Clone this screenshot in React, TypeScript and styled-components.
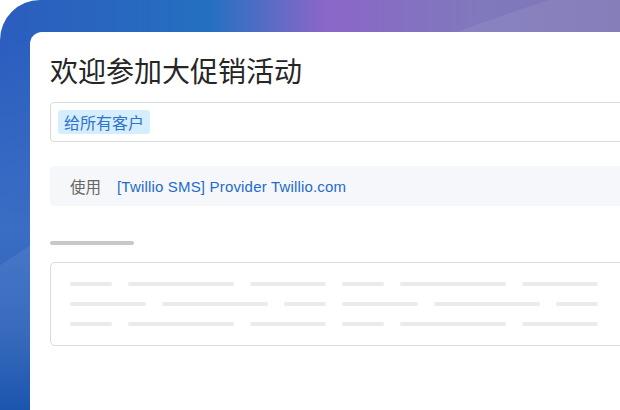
import styled, { createGlobalStyle } from 'styled-components'

const GlobalStyle = createGlobalStyle`
	html, body {
		margin: 0;
		padding: 0;
		background: #ffffff;
		overflow: hidden;
	}
	body {
		font-family: 'Liberation Sans', 'Noto Sans CJK SC', sans-serif;
	}
`

// skeleton widths for the placeholder table, px
const skeletonRows: number[][] = [
	[42, 106, 76, 42, 106, 76],
	[76, 106, 42, 76, 106, 42],
	[42, 106, 76, 42, 106, 76],
]

const App = () => {
	return (
		<>
			<GlobalStyle />
			<Backdrop>
				<Card>
					<Title>欢迎参加大促销活动</Title>
					<RecipientField>
						<Tag>给所有客户</Tag>
					</RecipientField>
					<ProviderRow>
						<ProviderLabel>使用</ProviderLabel>
						<ProviderLink href='#'>[Twillio SMS] Provider Twillio.com</ProviderLink>
					</ProviderRow>
					<SectionBar />
					<SkeletonBox>
						{skeletonRows.map((row, i) => (
							<SkeletonRow key={i}>
								{row.map((w, j) => (
									<SkeletonLine key={j} $width={w} />
								))}
							</SkeletonRow>
						))}
					</SkeletonBox>
				</Card>
			</Backdrop>
		</>
	)
}

export default App

const Backdrop = styled.div`
	width: 620px;
	height: 410px;
	overflow: hidden;
	box-sizing: border-box;
	padding: 32px 0 0 30px;
	border-top-left-radius: 40px;
	background:
		radial-gradient(
			circle 2262px at 1250px 2150px,
			rgba(255, 255, 255, 0.07) 2261px,
			rgba(255, 255, 255, 0) 2262px
		),
		linear-gradient(
			180deg,
			rgba(52, 104, 194, 0) 40px,
			#3a6ec4 230px,
			#2a60b8 330px,
			#0b48a8 410px
		),
		linear-gradient(
			90deg,
			#2c5dbf 0px,
			#2470c0 210px,
			#5a6cc6 270px,
			#8a66c8 325px,
			#8079bc 480px,
			#7c74b4 620px
		);
`

const Card = styled.div`
	width: 640px;
	height: 378px;
	box-sizing: border-box;
	padding: 18px 20px 0;
	background: #ffffff;
	border-top-left-radius: 12px;
`

const Title = styled.h1`
	margin: 0 0 12px;
	font-family: 'Noto Sans CJK SC', sans-serif;
	font-size: 28px;
	font-weight: 400;
	line-height: 40px;
	color: #262626;
`

const RecipientField = styled.div`
	display: flex;
	align-items: center;
	height: 40px;
	box-sizing: border-box;
	padding: 0 7px;
	border: 1px solid #d9d9d9;
	border-radius: 4px;
`

const Tag = styled.span`
	display: inline-flex;
	align-items: center;
	height: 24px;
	padding: 0 6px;
	border-radius: 3px;
	background: #d5edfc;
	color: #2f74cc;
	font-family: 'Noto Sans CJK SC', sans-serif;
	font-size: 16px;
`

const ProviderRow = styled.div`
	display: flex;
	align-items: center;
	gap: 16px;
	height: 40px;
	margin-top: 24px;
	padding: 0 20px;
	border-radius: 4px;
	background: #f5f7fa;
	font-size: 15px;
`

const ProviderLabel = styled.span`
	color: #666666;
	font-family: 'Noto Sans CJK SC', sans-serif;
	font-size: 15.5px;
`

const ProviderLink = styled.a`
	color: #1f6bcd;
	text-decoration: none;
	letter-spacing: 0.18px;
`

const SectionBar = styled.div`
	width: 84px;
	height: 4px;
	margin-top: 35px;
	border-radius: 2px;
	background: #c8c8c8;
`

const SkeletonBox = styled.div`
	display: flex;
	flex-direction: column;
	gap: 16px;
	margin-top: 17px;
	padding: 19px 19px 19px;
	border: 1px solid #dcdcdc;
	border-radius: 5px;
`

const SkeletonRow = styled.div`
	display: flex;
	gap: 16px;
`

const SkeletonLine = styled.div<{ $width: number }>`
	width: ${p => p.$width}px;
	height: 4px;
	border-radius: 2px;
	background: #ebebeb;
`
